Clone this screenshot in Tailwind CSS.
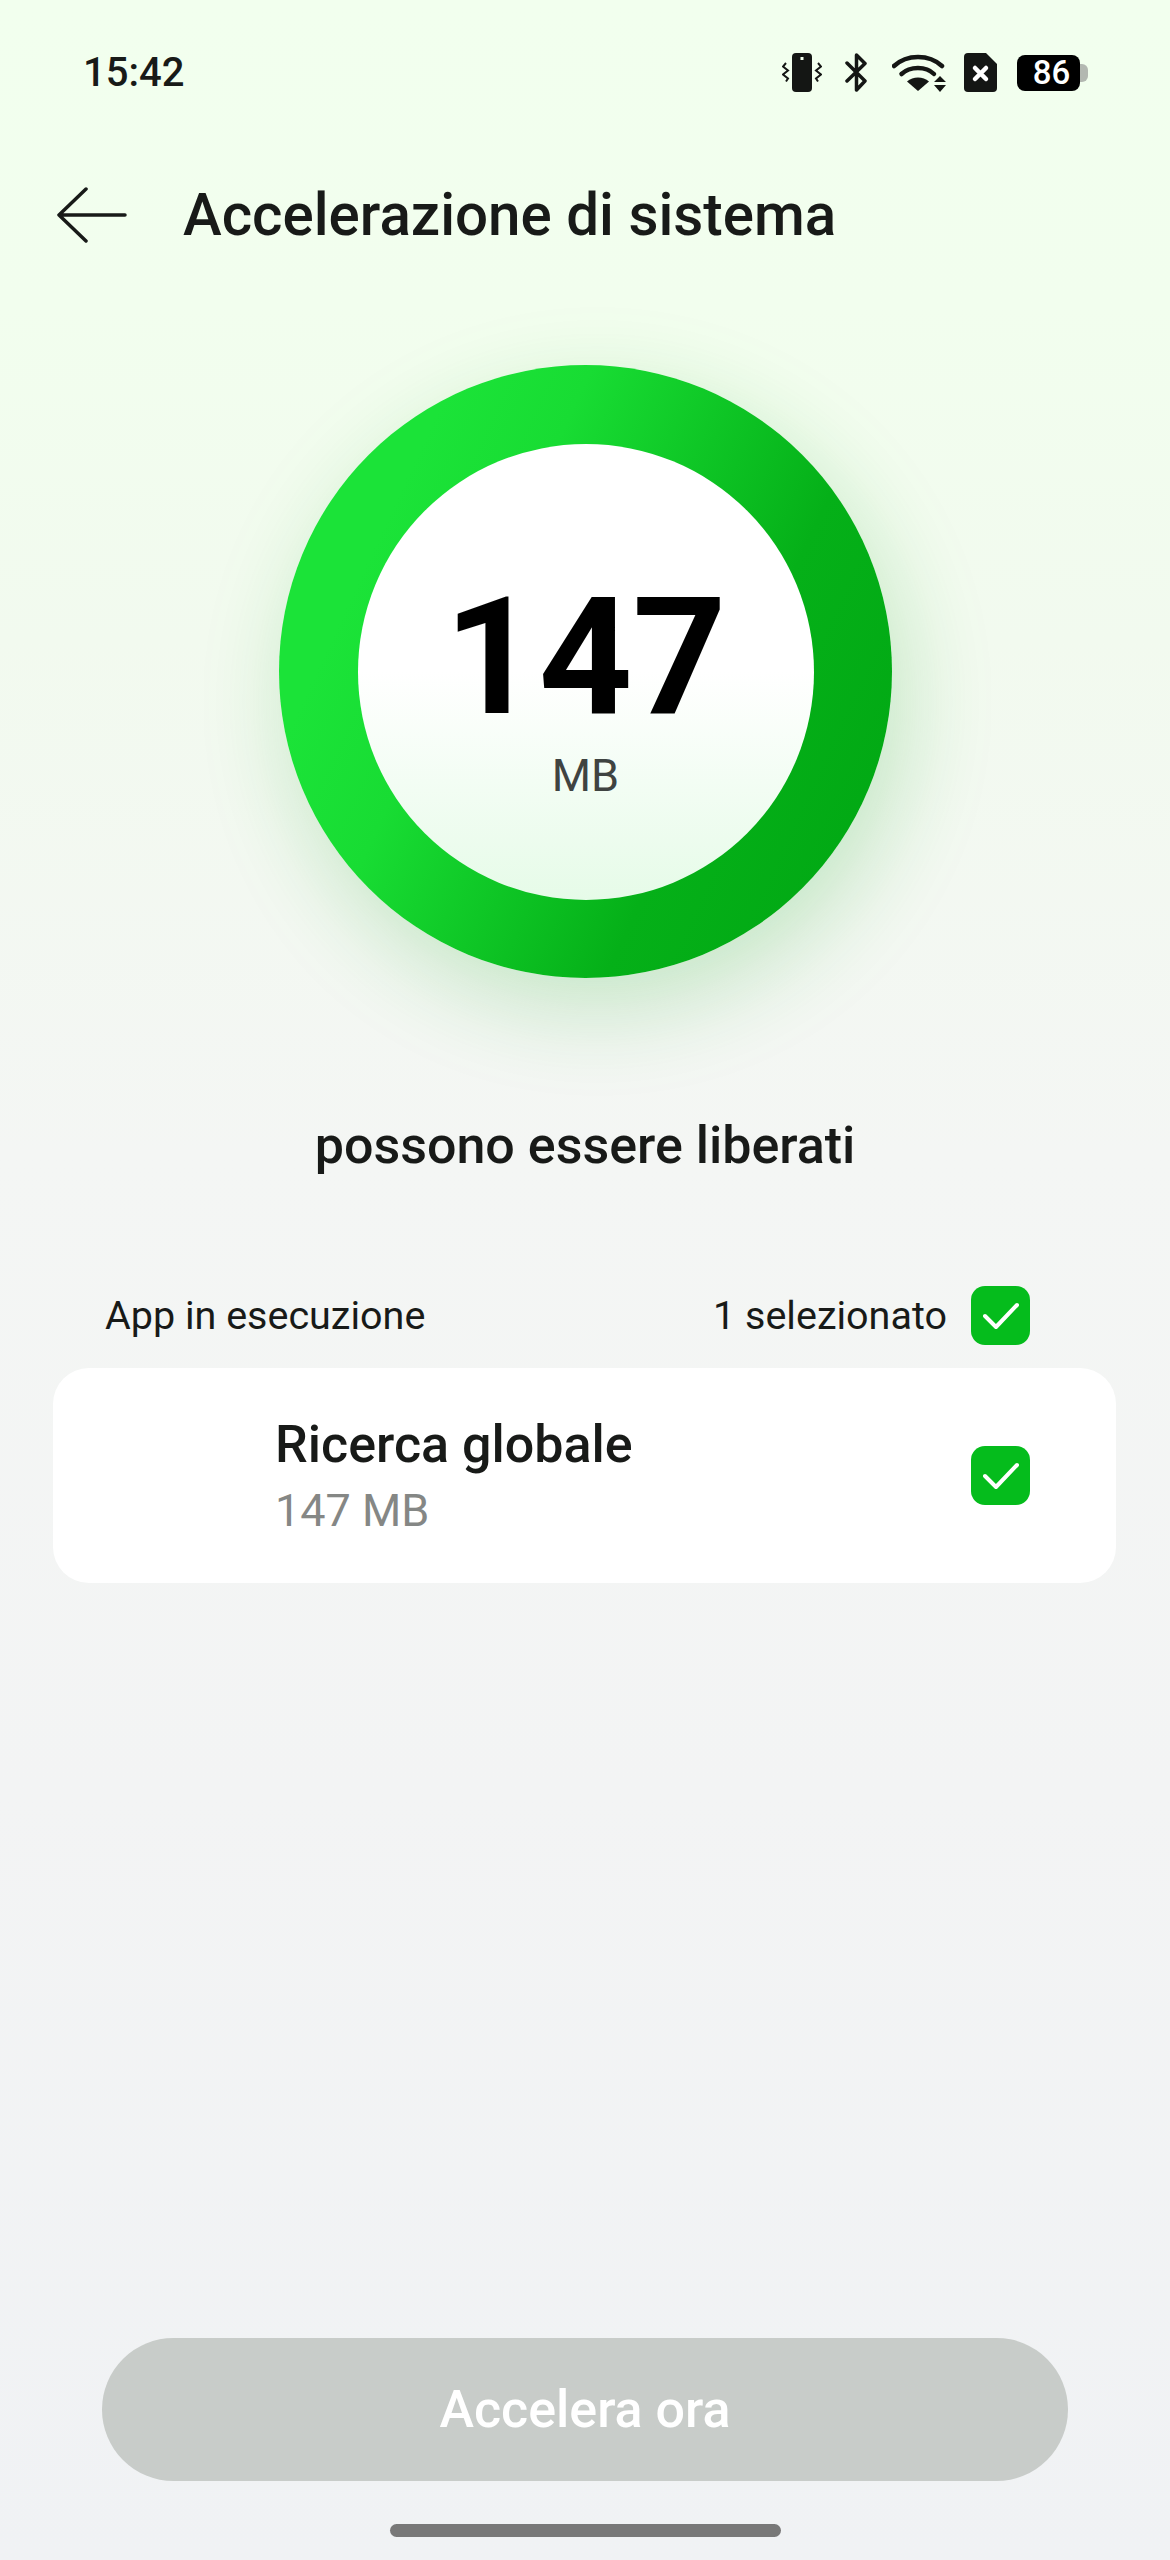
<!DOCTYPE html>
<html lang="it">
<head>
    <meta charset="UTF-8">
    <meta name="viewport" content="width=device-width, initial-scale=1.0">
    <title>Accelerazione di sistema</title>
    <script src="https://cdn.jsdelivr.net/npm/@tailwindcss/browser@4"></script>
</head>
<body class="w-[1170px] h-[2560px] overflow-hidden font-['Roboto',sans-serif] text-[#181a18] bg-[linear-gradient(180deg,#f2ffee_0%,#f2feee_12%,#f2faef_25%,#f4f6f4_45%,#f3f4f4_70%,#f0f2f4_100%)]">
    <div class="flex flex-col h-full">
        <!-- Status bar -->
        <div class="flex items-center justify-between h-[39px] mt-[53px] pl-[83px] pr-[82px]">
            <span class="text-[40px] leading-none font-medium">15:42</span>
            <div class="flex items-center">
                <svg width="40" height="39" viewBox="0 0 40 39" fill="none">
                    <rect x="10" y="0" width="20" height="39" rx="4" fill="#141614"/>
                    <rect x="18.500" y="4" width="3" height="3" fill="#f2ffee"/>
                    <path d="M4 10l-3 3.500 5 4-5 4 5 4-2 3M36 10l3 3.500-5 4 5 4-5 4 2 3" stroke="#141614" stroke-width="2"/>
                </svg>
                <svg class="ml-[23px]" width="23" height="39" viewBox="0 0 23 39" fill="none">
                    <path d="M2 10l18 18-8.500 9V2L20 10.500 2 28" stroke="#141614" stroke-width="3.500" stroke-linejoin="round" stroke-linecap="round"/>
                </svg>
                <svg class="ml-[24px]" width="55" height="39" viewBox="0 0 55 39" fill="none">
                    <path d="M2 13C15 1 37 1 50 13" stroke="#141614" stroke-width="4.500" stroke-linecap="round"/>
                    <path d="M9.500 21C18 13 34 13 42 21" stroke="#141614" stroke-width="4.500" stroke-linecap="round"/>
                    <path d="M26 38L15 28.500C21 23 31 23 37 28.500Z" fill="#141614"/>
                    <path d="M48 23l6 6H42zM48 39l-6-7h12z" fill="#141614"/>
                </svg>
                <svg class="ml-[17px]" width="33" height="39" viewBox="0 0 33 39">
                    <path d="M4 0H22L33 11V35a4 4 0 0 1-4 4H4a4 4 0 0 1-4-4V4a4 4 0 0 1 4-4Z" fill="#141614"/>
                    <path d="M11 15l11 11M22 15L11 26" stroke="#fff" stroke-width="4.500" stroke-linecap="round"/>
                </svg>
                <div class="relative ml-[20px] flex items-center">
                    <div class="w-[63px] h-[36px] rounded-[8px] bg-black text-white text-[33px] leading-[36px] font-medium text-center pl-[6px]">86</div>
                    <div class="w-[8px] h-[18px] rounded-r-[6px] bg-[#b3b8b1]"></div>
                </div>
            </div>
        </div>

        <!-- Header -->
        <header class="flex items-center h-[60px] mt-[93px] pl-[57px]">
            <svg width="70" height="56" viewBox="0 0 70 56" fill="none">
                <path d="M68 28H2M29 2L2 28l27 26" stroke="#181a18" stroke-width="3.500" stroke-linecap="round" stroke-linejoin="round"/>
            </svg>
            <h1 class="ml-[56px] text-[58.300px] leading-none font-medium">Accelerazione di sistema</h1>
        </header>

        <!-- Ring -->
        <div class="flex justify-center mt-[120px] pl-[1px]">
            <div class="flex items-center justify-center w-[613px] h-[613px] rounded-full bg-[linear-gradient(115deg,#1be338_20%,#18dc33_35%,#05b018_68%,#00a612_100%)] shadow-[12px_30px_90px_rgba(30,170,40,0.22)]">
                <div class="flex flex-col items-center w-[456px] h-[456px] rounded-full bg-[linear-gradient(180deg,#ffffff_50%,#e6fbe8_100%)]">
                    <span class="mt-[138px] text-[164px] leading-[150px] font-bold text-black">147</span>
                    <span class="mt-[18px] text-[45px] leading-[52px] text-[#3f4341]">MB</span>
                </div>
            </div>
        </div>

        <p class="mt-[136px] text-center text-[52px] leading-[64px] font-medium">possono essere liberati</p>

        <!-- Running apps -->
        <div class="flex items-center justify-between mt-[108px] pl-[105px] pr-[140px] h-[59px] text-[39.500px]">
            <span>App in esecuzione</span>
            <div class="flex items-center">
                <span>1 selezionato</span>
                <div class="flex items-center justify-center ml-[24px] w-[59px] h-[59px] rounded-[14px] bg-[#05bc1c]">
                    <svg width="36" height="28" viewBox="0 0 36 28" fill="none"><path d="M2 14l11 11L34 3" stroke="#fff" stroke-width="4" stroke-linecap="round" stroke-linejoin="round"/></svg>
                </div>
            </div>
        </div>

        <div class="flex items-center justify-between mt-[23px] ml-[53px] mr-[54px] h-[215px] pl-[222px] pr-[86px] rounded-[36px] bg-white">
            <div class="flex flex-col">
                <span class="text-[52px] leading-[60px] font-medium">Ricerca globale</span>
                <span class="mt-[10px] text-[45px] leading-[52px] text-[#858785]">147 MB</span>
            </div>
            <div class="flex items-center justify-center w-[59px] h-[59px] rounded-[14px] bg-[#05bc1c]">
                <svg width="36" height="28" viewBox="0 0 36 28" fill="none"><path d="M2 14l11 11L34 3" stroke="#fff" stroke-width="4" stroke-linecap="round" stroke-linejoin="round"/></svg>
            </div>
        </div>

        <!-- Bottom -->
        <button class="mt-auto mx-[102px] h-[143px] rounded-[72px] bg-[#c8ccc9] text-white text-[52px] font-medium">Accelera ora</button>
        <div class="mx-auto mt-[43px] mb-[23px] w-[391px] h-[13px] rounded-full bg-[#787878]"></div>
    </div>
</body>
</html>
